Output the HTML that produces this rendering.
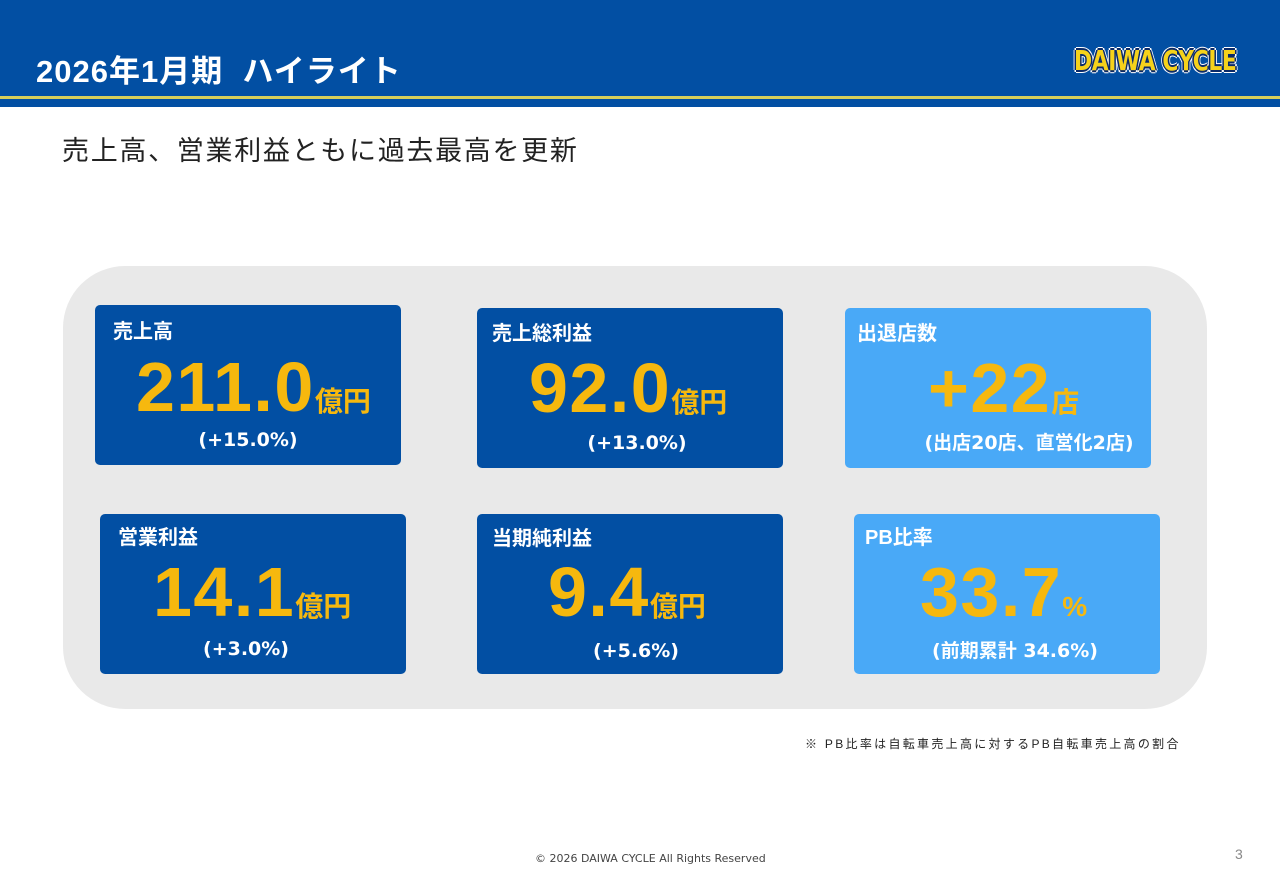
<!DOCTYPE html>
<html><head><meta charset="utf-8"><style>
*{margin:0;padding:0;box-sizing:border-box}
body{width:1280px;height:886px;position:relative;background:#fff;font-family:"Liberation Sans","Noto Sans CJK JP",sans-serif;overflow:hidden}
.hdr{position:absolute;left:0;top:0;width:1280px;height:107px;background:#024fa3}
.yl{position:absolute;left:0;top:96px;width:1280px;height:3px;background:#d6cf5a}
.title{position:absolute;left:36px;top:52px;font-size:31px;font-weight:bold;color:#fff;line-height:40px;white-space:pre;letter-spacing:1px}
.logo{position:absolute;left:1074px;top:44px;font-size:28px;font-weight:900;color:#f6d21b;letter-spacing:-0.5px;font-family:"DejaVu Sans",sans-serif;transform:scaleX(0.78);transform-origin:left;white-space:nowrap;line-height:34px;
text-shadow:-2px 0 #0a2a6a,2px 0 #0a2a6a,0 -2px #0a2a6a,0 2px #0a2a6a,-3px 0 #fff,3px 0 #fff,0 -3px #fff,0 3px #fff,2px 2px #fff,-2px -2px #fff,2px -2px #fff,-2px 2px #fff;}
.sub{position:absolute;left:62px;top:133px;font-size:27px;color:#222;line-height:36px;letter-spacing:1.7px}
.bg{position:absolute;left:63px;top:266px;width:1144px;height:443px;background:#e9e9e9;border-radius:62px}
.card{position:absolute;width:306px;height:160px;border-radius:5px;background:#024fa3}
.lt{background:#49a9f7}
.lab{position:absolute;font-size:20px;font-weight:bold;color:#fff;line-height:24px}
.num{position:absolute;display:flex;align-items:baseline;line-height:70px;color:#f6b80e;font-weight:bold;white-space:nowrap}
.num b{font-size:70px;letter-spacing:1.5px}
.num i{font-style:normal;font-size:28px}
.pct{position:absolute;font-size:19px;font-weight:bold;color:#fff;line-height:24px;white-space:nowrap;transform:translateX(-50%);font-family:"DejaVu Sans","Noto Sans CJK JP",sans-serif}
.note{position:absolute;left:805px;top:735px;font-size:12px;color:#222;letter-spacing:2.3px;white-space:nowrap}
.foot{position:absolute;left:535px;top:852px;font-size:11px;color:#444;font-family:"DejaVu Sans",sans-serif}
.pg{position:absolute;left:1235px;top:846px;font-size:14px;color:#888}
</style></head><body>
<div class="hdr"></div><div class="yl"></div>
<div class="title">2026年1月期  ハイライト</div>
<div class="logo">DAIWA CYCLE</div>
<div class="sub">売上高、営業利益ともに過去最高を更新</div>
<div class="bg"></div>
<div class="card" style="left:95px;top:305px"></div>
<div class="card" style="left:477px;top:308px"></div>
<div class="card lt" style="left:845px;top:308px"></div>
<div class="card" style="left:100px;top:514px"></div>
<div class="card" style="left:477px;top:514px"></div>
<div class="card lt" style="left:854px;top:514px"></div>

<div class="lab" style="left:113px;top:320px">売上高</div>
<div class="num" style="left:136px;top:352px"><b>211.0</b><i>億円</i></div>
<div class="pct" style="left:248px;top:428px">(+15.0%)</div>

<div class="lab" style="left:492px;top:322px">売上総利益</div>
<div class="num" style="left:529px;top:353px"><b>92.0</b><i>億円</i></div>
<div class="pct" style="left:637px;top:431px">(+13.0%)</div>

<div class="lab" style="left:857px;top:322px">出退店数</div>
<div class="num" style="left:928px;top:353px"><b>+22</b><i>店</i></div>
<div class="pct" style="left:1029px;top:431px">(出店20店、直営化2店)</div>

<div class="lab" style="left:118px;top:526px">営業利益</div>
<div class="num" style="left:153px;top:557px"><b>14.1</b><i>億円</i></div>
<div class="pct" style="left:246px;top:637px">(+3.0%)</div>

<div class="lab" style="left:492px;top:527px">当期純利益</div>
<div class="num" style="left:548px;top:557px"><b>9.4</b><i>億円</i></div>
<div class="pct" style="left:636px;top:639px">(+5.6%)</div>

<div class="lab" style="left:865px;top:526px">PB比率</div>
<div class="num" style="left:920px;top:557px"><b>33.7</b><i>%</i></div>
<div class="pct" style="left:1015px;top:639px">(前期累計  34.6%)</div>

<div class="note">※ PB比率は自転車売上高に対するPB自転車売上高の割合</div>
<div class="foot">© 2026 DAIWA CYCLE All Rights Reserved</div>
<div class="pg">3</div>
</body></html>
